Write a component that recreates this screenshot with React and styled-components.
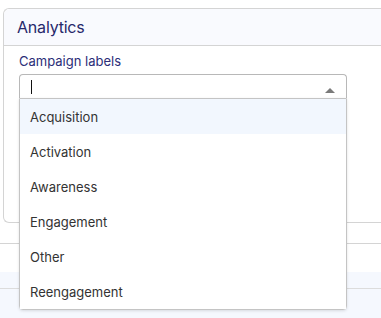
import React from 'react';
import styled, { createGlobalStyle } from 'styled-components';

const GlobalStyle = createGlobalStyle`
  html, body {
    margin: 0;
    padding: 0;
    background: #fff;
    overflow: hidden;
  }
  body {
    font-family: Inter, "Noto Sans", sans-serif;
  }
`;

const options = ['Acquisition', 'Activation', 'Awareness', 'Engagement', 'Other', 'Reengagement'];

const App = () => {
  return (
    <Page>
      <GlobalStyle />
      <Card>
        <CardHeader>Analytics</CardHeader>
        <CardBody>
          <Label>Campaign labels</Label>
          <SelectWrap>
            <Input>
              <Caret />
              <Arrow />
            </Input>
            <Menu>
              {options.map((o, i) => (
                <Option key={o} active={i === 0}>
                  {o}
                </Option>
              ))}
            </Menu>
          </SelectWrap>
        </CardBody>
      </Card>
      <Divider />
      <Band>
        <BandLine />
      </Band>
    </Page>
  );
};

const Page = styled.div`
  width: 381px;
  height: 318px;
  padding-top: 8px;
  box-sizing: border-box;
  display: flex;
  flex-direction: column;
`;

const Card = styled.div`
  margin-left: 3px;
  height: 215px;
  border: 1px solid #d4d4d4;
  border-right: none;
  border-radius: 6px 0 0 6px;
  display: flex;
  flex-direction: column;
  box-sizing: border-box;
`;

const CardHeader = styled.div`
  height: 37px;
  box-sizing: border-box;
  background: #f9fafe;
  border-bottom: 1px solid #d4d4d4;
  border-radius: 6px 0 0 0;
  padding: 8px 0 0 13px;
  font-size: 16px;
  line-height: 20px;
  letter-spacing: -0.2px;
  color: #27296b;
`;

const CardBody = styled.div`
  padding: 7px 0 0 15px;
`;

const Label = styled.div`
  font-size: 13px;
  line-height: 16px;
  color: #2b2e78;
  margin-bottom: 5px;
`;

const SelectWrap = styled.div`
  position: relative;
  width: 328px;
`;

const Input = styled.div`
  height: 24px;
  box-sizing: border-box;
  border: 1px solid #b8b8b8;
  border-bottom: none;
  border-radius: 4px 4px 0 0;
  display: flex;
  align-items: center;
  justify-content: space-between;
  padding: 0 11px 0 11px;
`;

const Caret = styled.span`
  width: 1px;
  height: 14px;
  background: #111;
  margin-top: 1px;
`;

const Arrow = styled.span`
  width: 0;
  height: 0;
  border-left: 5px solid transparent;
  border-right: 5px solid transparent;
  border-bottom: 5px solid #7a7a7a;
  margin-top: 8px;
`;

const Menu = styled.div`
  position: absolute;
  top: 24px;
  left: 0;
  right: 0;
  background: #fff;
  border: 1px solid #c4c4c4;
  border-radius: 0 0 4px 4px;
  box-shadow: 0 1px 3px rgba(0, 0, 0, 0.12);
  z-index: 2;
  display: flex;
  flex-direction: column;
`;

const Option = styled.div`
  height: 35px;
  display: flex;
  align-items: center;
  padding-left: 10px;
  font-size: 13px;
  color: #333;
  background: ${(p) => (p.active ? '#f2f7fe' : '#fff')};
`;

const Divider = styled.div`
  margin-top: 20px;
  height: 1px;
  background: #d4d4d4;
`;

const Band = styled.div`
  margin-top: 28px;
  flex: 1;
  background: #f5f8fe;
  padding-top: 16px;
`;

const BandLine = styled.div`
  height: 1px;
  background: #dcdcdc;
`;

export default App;
